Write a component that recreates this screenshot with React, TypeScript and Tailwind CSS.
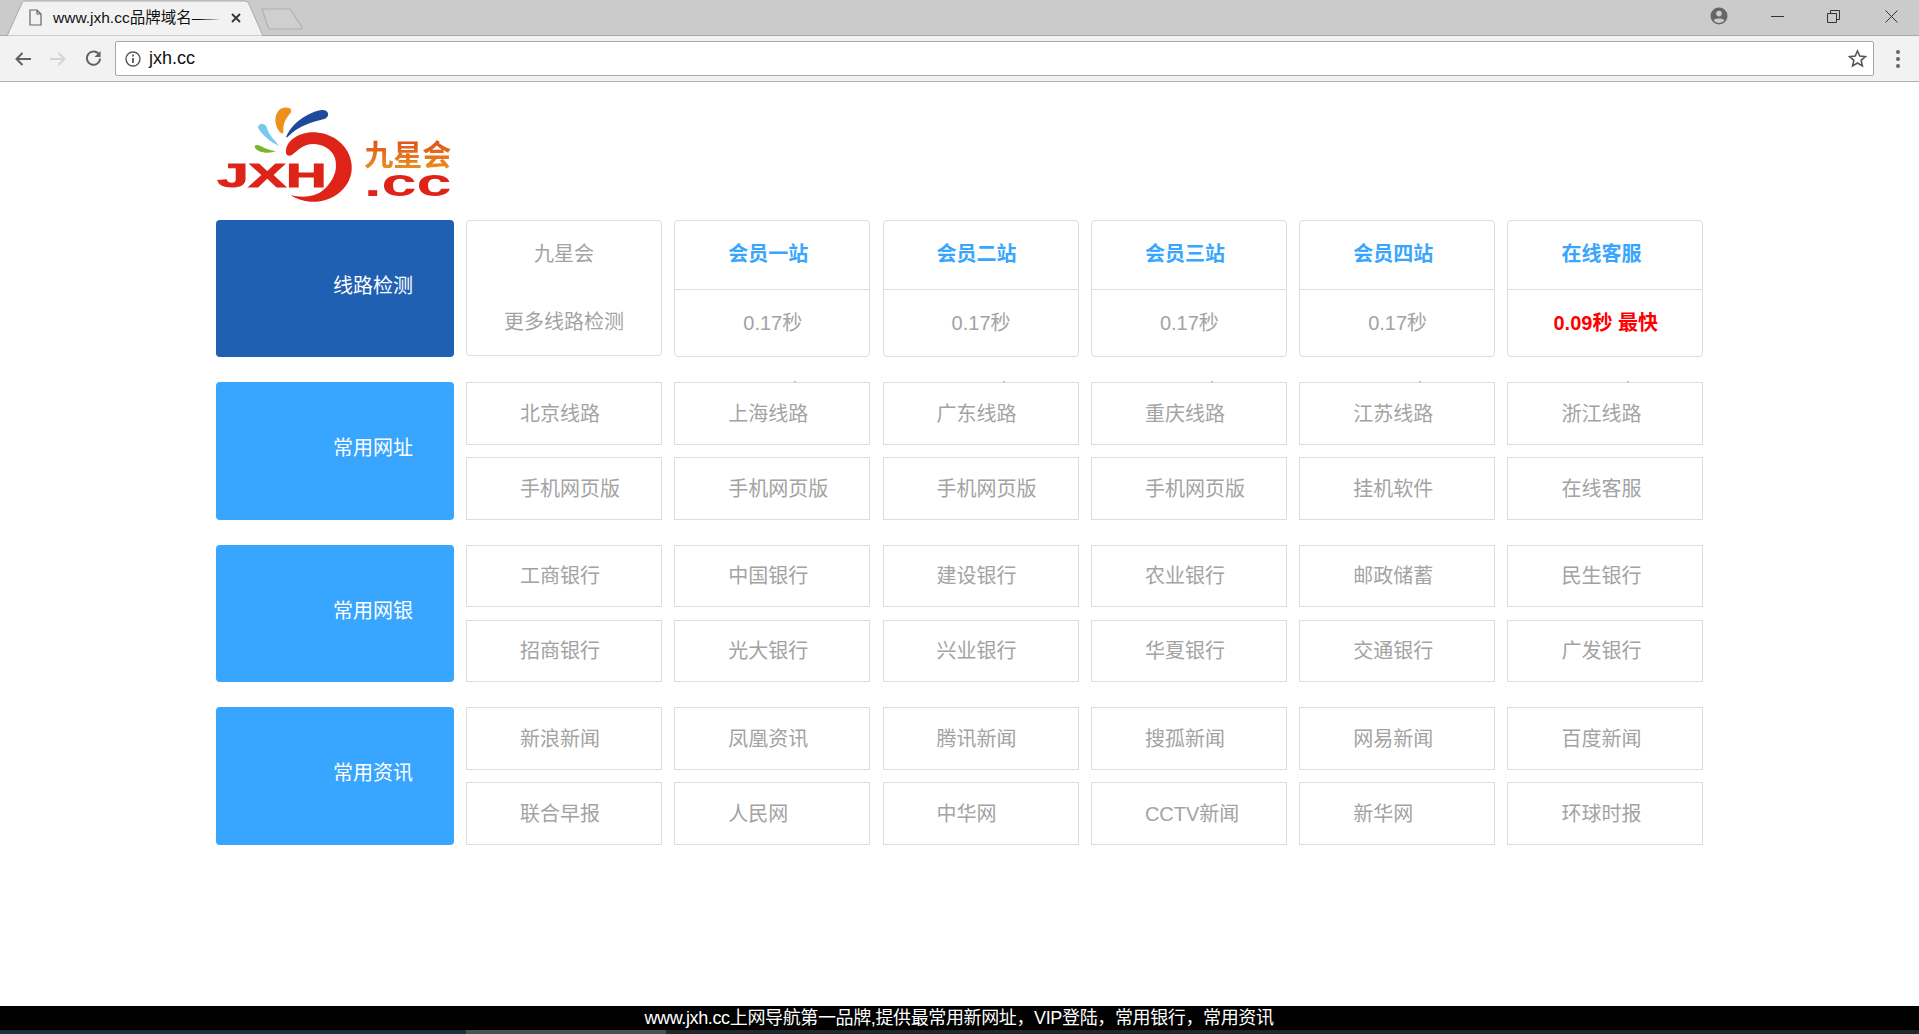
const font = "font-['Liberation_Sans','Noto_Sans_CJK_SC',sans-serif]";

function Row({ label, rows, compact, dots }: { label: string; rows: string[][]; compact?: boolean; dots?: boolean }) {
  return (
    <div className="flex gap-[12px]">
      <div className={`w-[238px] ${compact ? "h-[137px]" : "h-[138px]"} rounded-[4px] bg-[#38a6fe] text-white text-[20px] flex items-center pl-[117px] pb-[6px]`}>{label}</div>
      <div className={`flex flex-col ${compact ? "gap-[13px]" : "gap-[12px]"}`}>
        {rows.map((r, i) => (
          <div key={i} className="flex gap-[12.3px]">
            {r.map((t, j) => (
              <div key={j} className={`relative w-[196px] ${compact ? "h-[62px]" : "h-[63px]"} border border-[#dddddd] flex items-center text-[20px] text-[#a3a3a3] pl-[53px]`}>
                {t}
                {dots && i === 0 && j > 0 && <span className="absolute left-[119px] top-[-2px] w-[2px] h-[1px] bg-[#b8b8b8]" />}
              </div>
            ))}
          </div>
        ))}
      </div>
    </div>
  );
}

function Logo() {
  return (
    <svg className="blur-[0.5px]" width="250" height="130" viewBox="48 0 750 390">
      <defs>
        <linearGradient id="lg" x1="0" y1="0" x2="0" y2="1">
          <stop offset="0" stopColor="#dd3f18" />
          <stop offset="1" stopColor="#eb9a20" />
        </linearGradient>
      </defs>
      <path d="M258 142 C275 100 320 68 365 60 C385 58 392 78 375 86 C340 96 295 105 262 142 Z" fill="#1f4a9c" />
      <path d="M243 130 C222 110 220 75 240 58 C255 48 280 52 272 68 C262 82 248 92 250 130 Z" fill="#ef8f1c" />
      <path d="M238 168 C215 160 180 130 174 112 C176 98 195 98 200 112 C206 135 225 152 238 168 Z" fill="#78c8f0" />
      <path d="M228 184 C205 192 170 188 164 170 C168 160 180 168 195 175 C208 180 218 182 228 184 Z" fill="#77b82a" />
      <path d="M258 180 C262 145 310 122 355 128 C420 135 460 190 455 240 C450 300 390 340 330 335 C305 332 285 325 272 315 C300 322 340 325 370 300 C400 275 415 240 405 205 C395 170 350 155 320 165 C300 172 290 185 275 195 C265 200 255 195 258 180 Z" fill="#de2418" />
      <text x="52" y="290" fontSize="100" fontWeight="700" fill="#de2418" stroke="#de2418" strokeWidth="3" textLength="328" lengthAdjust="spacingAndGlyphs" fontFamily="'Liberation Sans',sans-serif">JXH</text>
      <text x="492" y="318" fontSize="116" fontWeight="700" fill="#de2418" textLength="263" lengthAdjust="spacingAndGlyphs" fontFamily="'Liberation Sans',sans-serif">.cc</text>
      <text x="493" y="228" fontSize="87" fontWeight="700" fill="url(#lg)" fontFamily="'Noto Sans CJK SC',sans-serif">九星会</text>
    </svg>
  );
}

export default function App() {
  return (
    <div className={`w-[1919px] h-[1034px] flex flex-col bg-white overflow-hidden ${font}`}>
      <header className="h-[82px] shrink-0 border-b border-[#b0b0b0] bg-[#f2f2f2]">
        <div className="h-[36px] bg-[#cbcbcb] border-b border-[#a8a8a8] flex items-center">
          <div className="relative flex items-center ml-[7px] w-[248px] h-[35px]">
            <svg className="absolute left-0 top-0" width="258" height="36" viewBox="0 0 258 36">
              <path d="M0 36 L15 3 Q16 1 19 1 H238 Q241 1 242 4 L256 36 Z" fill="#f2f2f2" stroke="#a8a8a8" />
            </svg>
            <svg className="relative ml-[22px]" width="13" height="17" viewBox="0 0 13 17" fill="none" stroke="#666" strokeWidth="1.2"><path d="M1 1 H8 L12 5 V16 H1 Z M8 1 V5 H12" /></svg>
            <div className="relative ml-[11px] w-[168px] overflow-hidden whitespace-nowrap text-[15.5px] text-[#111]">
              www.jxh.cc品牌域名——
              <div className="absolute right-0 top-0 w-[22px] h-full bg-gradient-to-r from-transparent to-[#f2f2f2]" />
            </div>
            <svg className="relative ml-[10px]" width="10" height="10" viewBox="0 0 10 10" stroke="#333" strokeWidth="1.8"><path d="M1 1 L9 9 M9 1 L1 9" /></svg>
          </div>
          <svg className="ml-[6px] mt-[2px]" width="42" height="22" viewBox="0 0 42 22" fill="#cfcfcf" stroke="#b0b0b0" strokeWidth="1.2"><path d="M1 1 H29 L41 19 Q41 21 39 21 H10 Q8 21 7 19 Z" /></svg>
          <div className="ml-auto flex items-center">
            <svg className="mr-[43px] mb-[4px]" width="18" height="18" viewBox="0 0 18 18"><circle cx="9" cy="9" r="8.5" fill="#666" /><circle cx="9" cy="6.6" r="2.8" fill="#cbcbcb" /><path d="M3.6 13.2 C5 10.8 13 10.8 14.4 13.2 C13 15 11 16 9 16 C7 16 5 15 3.6 13.2 Z" fill="#cbcbcb" /></svg>
            <svg className="mr-[43px] mb-[3px]" width="13" height="13" viewBox="0 0 13 13" stroke="#333"><path d="M0 6.5 H13" /></svg>
            <svg className="mr-[45px] mb-[3px]" width="13" height="13" viewBox="0 0 13 13" fill="none" stroke="#333"><path d="M0.5 3.5 H9.5 V12.5 H0.5 Z M3.5 3.5 V0.5 H12.5 V9.5 H9.5" /></svg>
            <svg className="mr-[21px] mb-[3px]" width="13" height="13" viewBox="0 0 13 13" stroke="#333"><path d="M0.5 0.5 L12.5 12.5 M12.5 0.5 L0.5 12.5" /></svg>
          </div>
        </div>
        <div className="h-[45px] flex items-center">
          <svg className="ml-[15px]" width="16" height="14" viewBox="0 0 16 14" fill="none" stroke="#5f6368" strokeWidth="2"><path d="M16 7 H2 M7.5 1 L1.5 7 L7.5 13" /></svg>
          <svg className="ml-[19px]" width="16" height="14" viewBox="0 0 16 14" fill="none" stroke="#d4d4d4" strokeWidth="2"><path d="M0 7 H14 M8.5 1 L14.5 7 L8.5 13" /></svg>
          <svg className="ml-[19px]" width="17" height="17" viewBox="0 0 18 18" fill="none" stroke="#5f6368" strokeWidth="2"><path d="M15 5 A7 7 0 1 0 16 9" /><path d="M16.5 1 V7.5 H10 Z" fill="#5f6368" stroke="none" /></svg>
          <div className="ml-[13px] h-[35px] w-[1759px] bg-white border border-[#a8a8a8] rounded-[2px] flex items-center">
            <svg className="ml-[9px]" width="16" height="16" viewBox="0 0 16 16" fill="none" stroke="#555" strokeWidth="1.4"><circle cx="8" cy="8" r="7" /><path d="M8 7 V12" strokeWidth="1.8" /><path d="M8 3.6 V5.4" strokeWidth="1.8" /></svg>
            <span className="ml-[8px] text-[18px] text-[#111]">jxh.cc</span>
            <svg className="ml-auto mr-[6px]" width="19" height="19" viewBox="0 0 24 24" fill="none" stroke="#555" strokeWidth="2"><path d="M12 2.5 L14.9 9 L22 9.7 L16.6 14.4 L18.2 21.4 L12 17.7 L5.8 21.4 L7.4 14.4 L2 9.7 L9.1 9 Z" /></svg>
          </div>
          <div className="ml-[22px] flex flex-col gap-[3px]">
            <span className="w-[4px] h-[4px] rounded-full bg-[#666]" />
            <span className="w-[4px] h-[4px] rounded-full bg-[#666]" />
            <span className="w-[4px] h-[4px] rounded-full bg-[#666]" />
          </div>
        </div>
      </header>

      <main className="flex-1 pl-[216px]">
        <div className="h-[138px] pt-[8px]"><Logo /></div>
        <div className="flex flex-col gap-[25px]">
          <div className="flex gap-[12px]">
            <div className="w-[238px] h-[137px] rounded-[4px] bg-[#2060b2] text-white text-[20px] flex items-center pl-[117px] pb-[6px]">线路检测</div>
            <div className="flex gap-[12.3px] items-start">
              <div className="w-[196px] h-[136px] border border-[#dddddd] rounded-[4px] flex flex-col items-center text-[20px] text-[#a3a3a3] pt-[18px]">
                <span>九星会</span>
                <span className="mt-[38px]">更多线路检测</span>
              </div>
              {["会员一站", "会员二站", "会员三站", "会员四站", "在线客服"].map((t, i) => (
                <div key={t} className="w-[196px] h-[137px] border border-[#dddddd] rounded-[4px] flex flex-col text-[20px]">
                  <div className="h-[69px] border-b border-[#dddddd] flex items-center font-bold text-[#38a6fe] pl-[53px] pb-[2px]">{t}</div>
                  <div className={`flex-1 flex items-center ${i === 4 ? "font-bold text-[#ff0000] pl-[45px]" : "text-[#a3a3a3] pl-[68px]"}`}>{i === 4 ? "0.09秒 最快" : "0.17秒"}</div>
                </div>
              ))}
            </div>
          </div>
          <Row dots label="常用网址" rows={[["北京线路", "上海线路", "广东线路", "重庆线路", "江苏线路", "浙江线路"], ["手机网页版", "手机网页版", "手机网页版", "手机网页版", "挂机软件", "在线客服"]]} />
          <Row compact label="常用网银" rows={[["工商银行", "中国银行", "建设银行", "农业银行", "邮政储蓄", "民生银行"], ["招商银行", "光大银行", "兴业银行", "华夏银行", "交通银行", "广发银行"]]} />
          <Row label="常用资讯" rows={[["新浪新闻", "凤凰资讯", "腾讯新闻", "搜孤新闻", "网易新闻", "百度新闻"], ["联合早报", "人民网", "中华网", "CCTV新闻", "新华网", "环球时报"]]} />
        </div>
      </main>

      <footer className="shrink-0">
        <div className="h-[24px] bg-black text-white text-[18px] tracking-[-0.37px] leading-[24px] flex justify-center pr-[1px]">www.jxh.cc上网导航第一品牌,提供最常用新网址，VIP登陆，常用银行，常用资讯</div>
        <div className="h-[4px] flex">
          <div className="w-[466px] bg-[#1d2f3a]" />
          <div className="w-[200px] bg-[#4a5256]" />
          <div className="flex-1 bg-[#20282c]" />
        </div>
      </footer>
    </div>
  );
}
